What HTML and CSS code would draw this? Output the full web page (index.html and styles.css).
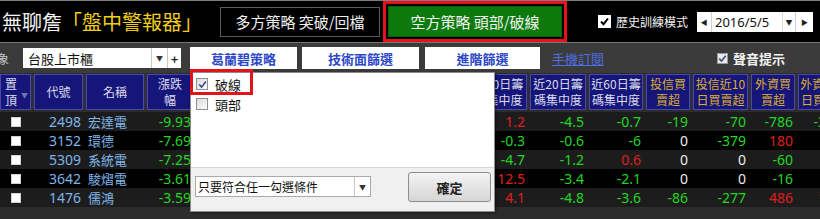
FILE: index.html
```html
<!DOCTYPE html>
<html lang="zh-Hant">
<head>
<meta charset="utf-8">
<title>盤中警報器</title>
<link rel="stylesheet" href="styles.css">
</head>
<body>
<div class="app">
  <div class="topbar">
    <div class="title">無聊詹<span class="yel">「盤中警報器」</span></div>
    <div class="btn-long">多方策略 突破/回檔</div>
    <div class="hl-frame"><div class="btn-green">空方策略 頭部/破線</div></div>
    <div class="hist">
      <span class="cb-white"><svg width="9" height="9" viewBox="0 0 9 9"><path d="M1 4.5 L3.5 7.2 L8 1.5" fill="none" stroke="#000" stroke-width="2"/></svg></span>
      <span>歷史訓練模式</span>
    </div>
    <div class="datebox">
      <span class="dcell dl">&#9664;</span>
      <span class="dtext">2016/5/5</span>
      <span class="dcell dd">&#9660;</span>
      <span class="dcell dr">&#9654;</span>
    </div>
  </div>

  <div class="toolbar">
    <span class="tlabel">對象</span>
    <div class="sel">
      <span class="sel-text">台股上市櫃</span>
      <span class="sel-arrow">&#9660;</span>
      <span class="sel-plus">+</span>
    </div>
    <div class="tbtn w1">葛蘭碧策略</div>
    <div class="tbtn w2">技術面篩選</div>
    <div class="tbtn w3">進階篩選</div>
    <span class="tlink">手機訂閱</span>
    <div class="sound">
      <span class="cb-light"><svg width="9" height="9" viewBox="0 0 9 9"><path d="M1.2 4.6 L3.5 7 L7.8 1.8" fill="none" stroke="#3c4a78" stroke-width="1.6"/></svg></span>
      <span>聲音提示</span>
    </div>
  </div>

  <div class="table">
    <div class="row head">
      <div class="hc top"><span class="v2">置<br>頂</span><span class="sort">&#9660;</span></div>
      <div class="hc">代號</div>
      <div class="hc">名稱</div>
      <div class="hc"><span>漲跌<br>幅</span></div>
      <div class="hc">成交價</div>
      <div class="hc">漲跌</div>
      <div class="hc">成交量</div>
      <div class="hc">近1日籌<br>碼集中度</div>
      <div class="hc">近5日籌<br>碼集中度</div>
      <div class="hc">近10日籌<br>碼集中度</div>
      <div class="hc">近20日籌<br>碼集中度</div>
      <div class="hc">近60日籌<br>碼集中度</div>
      <div class="hc gold">投信買<br>賣超</div>
      <div class="hc gold">投信近10<br>日買賣超</div>
      <div class="hc gold">外資買<br>賣超</div>
      <div class="hc gold">外資近10<br>日買賣超</div>
    </div>

    <div class="row data odd">
      <div class="c cbx"><span class="rcb"></span></div>
      <div class="c code">2498</div><div class="c name">宏達電</div>
      <div class="c g">-9.93</div><div class="c g">40.2</div><div class="c g">-4.4</div><div class="c">12035</div><div class="c r">0.8</div><div class="c g">-2.1</div>
      <div class="c r">1.2</div><div class="c g">-4.5</div><div class="c g">-0.7</div><div class="c g">-19</div><div class="c g">-70</div><div class="c g">-786</div><div class="c g">-3120</div>
    </div>
    <div class="row data even">
      <div class="c cbx"><span class="rcb"></span></div>
      <div class="c code">3152</div><div class="c name">環德</div>
      <div class="c g">-7.69</div><div class="c g">24.0</div><div class="c g">-2.0</div><div class="c">3120</div><div class="c g">-1.5</div><div class="c g">-0.9</div>
      <div class="c g">-0.3</div><div class="c g">-0.6</div><div class="c g">-6</div><div class="c w">0</div><div class="c g">-379</div><div class="c r">180</div><div class="c r">95</div>
    </div>
    <div class="row data odd">
      <div class="c cbx"><span class="rcb"></span></div>
      <div class="c code">5309</div><div class="c name">系統電</div>
      <div class="c g">-7.25</div><div class="c g">19.2</div><div class="c g">-1.5</div><div class="c">2204</div><div class="c g">-3.2</div><div class="c g">-4.0</div>
      <div class="c g">-4.7</div><div class="c g">-1.2</div><div class="c r">0.6</div><div class="c w">0</div><div class="c w">0</div><div class="c g">-60</div><div class="c g">-120</div>
    </div>
    <div class="row data even">
      <div class="c cbx"><span class="rcb"></span></div>
      <div class="c code">3642</div><div class="c name">駿熠電</div>
      <div class="c g">-3.61</div><div class="c g">56.1</div><div class="c g">-2.1</div><div class="c">1520</div><div class="c r">8.4</div><div class="c r">10.2</div>
      <div class="c r">12.5</div><div class="c g">-3.4</div><div class="c g">-2.1</div><div class="c w">0</div><div class="c w">0</div><div class="c g">-16</div><div class="c g">-44</div>
    </div>
    <div class="row data odd">
      <div class="c cbx"><span class="rcb"></span></div>
      <div class="c code">1476</div><div class="c name">儒鴻</div>
      <div class="c g">-3.59</div><div class="c g">429</div><div class="c g">-16</div><div class="c">2877</div><div class="c r">2.2</div><div class="c r">3.5</div>
      <div class="c r">4.1</div><div class="c g">-4.8</div><div class="c g">-3.6</div><div class="c g">-86</div><div class="c g">-277</div><div class="c r">486</div><div class="c r">1210</div>
    </div>
  </div>

  <div class="popup">
    <div class="plist">
      <div class="pitem">
        <span class="wcb"><svg width="9" height="9" viewBox="0 0 9 9"><path d="M1.3 4.6 L3.6 7.1 L7.9 1.5" fill="none" stroke="#2a3f8f" stroke-width="1.5"/></svg></span>
        <span>破線</span>
      </div>
      <div class="pitem">
        <span class="wcb"></span>
        <span>頭部</span>
      </div>
    </div>
    <div class="pfoot">
      <div class="psel"><span class="psel-text">只要符合任一勾選條件</span><span class="psel-arrow">&#9660;</span></div>
      <div class="pbtn">確定</div>
    </div>
  </div>
  <div class="hl-box"></div>
</div>
</body>
</html>
```

FILE: styles.css
```css
* { box-sizing: border-box; }
html, body { margin: 0; padding: 0; }
body {
  width: 820px;
  height: 219px;
  overflow: hidden;
  background: #000;
  font-family: "Noto Sans CJK TC", "Noto Sans", sans-serif;
}
.app {
  position: relative;
  width: 820px;
  height: 219px;
  overflow: hidden;
  background: #2c2c2c;
}

/* top bar */
.topbar {
  height: 42px;
  background: #000;
  border-top: 1px solid #7c7c7c;
  display: flex;
  align-items: center;
}
.topbar > * { flex: none; }
.title {
  margin-left: 2px;
  font-size: 20px;
  line-height: 24px;
  color: #f4f4f4;
  white-space: nowrap;
  width: 200px;
}
.yel { color: #f2cf1c; }
.btn-long {
  margin-left: 18px;
  width: 160px;
  height: 30px;
  border: 1px solid #5c5c5c;
  background: #000;
  color: #f0f0f0;
  font-size: 15px;
  display: flex;
  align-items: center;
  justify-content: center;
  white-space: nowrap;
}
.hl-frame {
  margin-left: 3px;
  width: 184px;
  height: 41px;
  border: 3px solid #e5121a;
  padding: 2px;
  background: #000;
  align-self: flex-end;
}
.btn-green {
  width: 100%;
  height: 100%;
  background: #0b7a0b;
  border: 1px solid #0e5c0e;
  color: #f4f4f4;
  font-size: 15px;
  display: flex;
  align-items: center;
  justify-content: center;
  white-space: nowrap;
}
.hist {
  margin-left: 31px;
  display: flex;
  align-items: center;
  gap: 5px;
  color: #f0f0f0;
  font-size: 12px;
  width: 99px;
  white-space: nowrap;
}
.cb-white {
  width: 13px;
  height: 13px;
  background: #fff;
  display: flex;
  align-items: center;
  justify-content: center;
}
.datebox {
  width: 116px;
  height: 20px;
  background: #fff;
  display: flex;
  align-items: stretch;
  font-size: 13px;
  color: #111;
}
.dcell {
  display: flex;
  align-items: center;
  justify-content: center;
  font-size: 7px;
  color: #222;
}
.dl { width: 15px; border-right: 1px solid #cfcfcf; }
.dtext {
  width: 70px;
  padding-left: 3px;
  font-family: "Noto Sans", sans-serif;
  font-size: 13px;
  display: flex;
  align-items: center;
}
.dd { width: 13px; border-left: 1px solid #dcdcdc; }
.dr { width: 18px; border-left: 1px solid #cfcfcf; }

/* toolbar */
.toolbar {
  height: 31px;
  background: #3b3b3b;
  border-top: 1px solid #777;
  display: flex;
  align-items: center;
}
.toolbar > * { flex: none; }
.tlabel {
  margin-left: -15px;
  width: 24px;
  font-size: 12px;
  color: #c8c8c8;
  white-space: nowrap;
}
.sel {
  margin-left: 14px;
  width: 158px;
  height: 20px;
  background: #fff;
  display: flex;
  align-items: stretch;
}
.sel-text {
  width: 129px;
  padding-left: 5px;
  font-size: 13px;
  color: #111;
  display: flex;
  align-items: center;
  border-right: 1px solid #c8c8c8;
}
.sel-arrow {
  width: 16px;
  font-size: 7px;
  color: #333;
  display: flex;
  align-items: center;
  justify-content: center;
  border-right: 1px solid #c8c8c8;
}
.sel-plus {
  width: 13px;
  font-size: 12px;
  font-weight: bold;
  color: #222;
  display: flex;
  align-items: center;
  justify-content: center;
}
.tbtn {
  height: 22px;
  background: #fff;
  color: #2c48c8;
  font-size: 13px;
  font-weight: bold;
  display: flex;
  align-items: center;
  justify-content: center;
  white-space: nowrap;
}
.w1 { margin-left: 9px; width: 107px; }
.w2 { margin-left: 5px; width: 117px; }
.w3 { margin-left: 6px; width: 115px; }
.tlink {
  margin-left: 12px;
  font-size: 13px;
  color: #4d6ee0;
  text-decoration: underline;
  white-space: nowrap;
}
.sound {
  margin-left: 113px;
  display: flex;
  align-items: center;
  gap: 5px;
  color: #f2f2f2;
  font-size: 13px;
  font-weight: bold;
  white-space: nowrap;
}
.cb-light {
  width: 11px;
  height: 11px;
  background: #e8e8ee;
  border: 1px solid #9a9aa0;
  display: flex;
  align-items: center;
  justify-content: center;
}

/* table */
.table {
  padding-top: 1px;
  width: 852px;
}
.row {
  display: grid;
  grid-template-columns: 31px 49px 58px 46px 52px 52px 52px 52px 51px 57px 56px 54px 44px 55px 44px 54px;
  column-gap: 3px;
}
.head {
  height: 36px;
  background: #2e2e3e;
  margin-bottom: 2px;
}
.hc {
  background: #15157a;
  border: 1px solid #4a4aa2;
  color: #dcdcec;
  font-size: 12px;
  line-height: 16px;
  display: flex;
  align-items: center;
  justify-content: center;
  text-align: center;
  white-space: nowrap;
  position: relative;
}
.hc.gold { color: #dcae2e; }
.hc.top { justify-content: flex-start; padding-left: 4px; }
.sort {
  position: absolute;
  right: 2px;
  top: 12px;
  font-size: 7px;
  color: #7070b8;
}
.data {
  height: 19px;
  font-family: "Noto Sans", "Noto Sans CJK TC", sans-serif;
  font-size: 14px;
}
.odd { background: #1c1c1c; }
.even { background: #000; }
.c {
  display: flex;
  align-items: center;
  justify-content: flex-end;
  padding-right: 2px;
  line-height: 19px;
  white-space: nowrap;
  color: #e6e6e6;
}
.c.cbx { justify-content: center; padding-right: 0; }
.rcb {
  width: 10px;
  height: 10px;
  background: #fff;
  border: 1px solid #d0d0d0;
}
.c.code { color: #7fb4e6; }
.c.name {
  color: #7fb4e6;
  justify-content: flex-start;
  padding-left: 2px;
  font-family: "Noto Sans CJK TC", sans-serif;
  font-size: 13px;
}
.c.g { color: #22d622; }
.c.r { color: #e01e1e; }
.c.w { color: #ececec; }

/* popup */
.popup {
  position: absolute;
  left: 190px;
  top: 72px;
  width: 305px;
  height: 140px;
  background: #fff;
  border: 1px solid #8c8c8c;
  display: flex;
  flex-direction: column;
  box-shadow: 1px 1px 2px rgba(0,0,0,0.5);
}
.plist {
  flex: 1;
  padding-top: 1px;
  padding-left: 5px;
}
.pitem {
  height: 20px;
  display: flex;
  align-items: center;
  gap: 7px;
  font-size: 13px;
  color: #111;
}
.wcb {
  width: 12px;
  height: 12px;
  border: 1px solid #8e8f8f;
  background: linear-gradient(135deg, #dcdcdc, #fbfbfb);
  display: flex;
  align-items: center;
  justify-content: center;
}
.pfoot {
  height: 44px;
  background: #f0f0f0;
  border-top: 1px solid #d5d5d5;
  display: flex;
  align-items: flex-start;
  padding-left: 4px;
}
.psel {
  margin-top: 8px;
  width: 176px;
  height: 21px;
  background: #fff;
  border: 1px solid #a9a9a9;
  display: flex;
  align-items: stretch;
}
.psel-text {
  flex: 1;
  padding-left: 2px;
  font-size: 12px;
  color: #111;
  display: flex;
  align-items: center;
  border-right: 1px solid #c8c8c8;
  white-space: nowrap;
}
.psel-arrow {
  width: 15px;
  font-size: 7px;
  color: #333;
  display: flex;
  align-items: center;
  justify-content: center;
}
.pbtn {
  margin-top: 4px;
  margin-left: 37px;
  width: 83px;
  height: 30px;
  border: 1px solid #8e8e8e;
  border-radius: 3px;
  background: linear-gradient(#f4f4f4, #e4e4e4 50%, #d6d6d6);
  font-size: 13px;
  font-weight: bold;
  color: #222;
  display: flex;
  align-items: center;
  justify-content: center;
}
.hl-box {
  position: absolute;
  left: 190px;
  top: 69px;
  width: 63px;
  height: 26px;
  border: 3px solid #e5121a;
}
```
